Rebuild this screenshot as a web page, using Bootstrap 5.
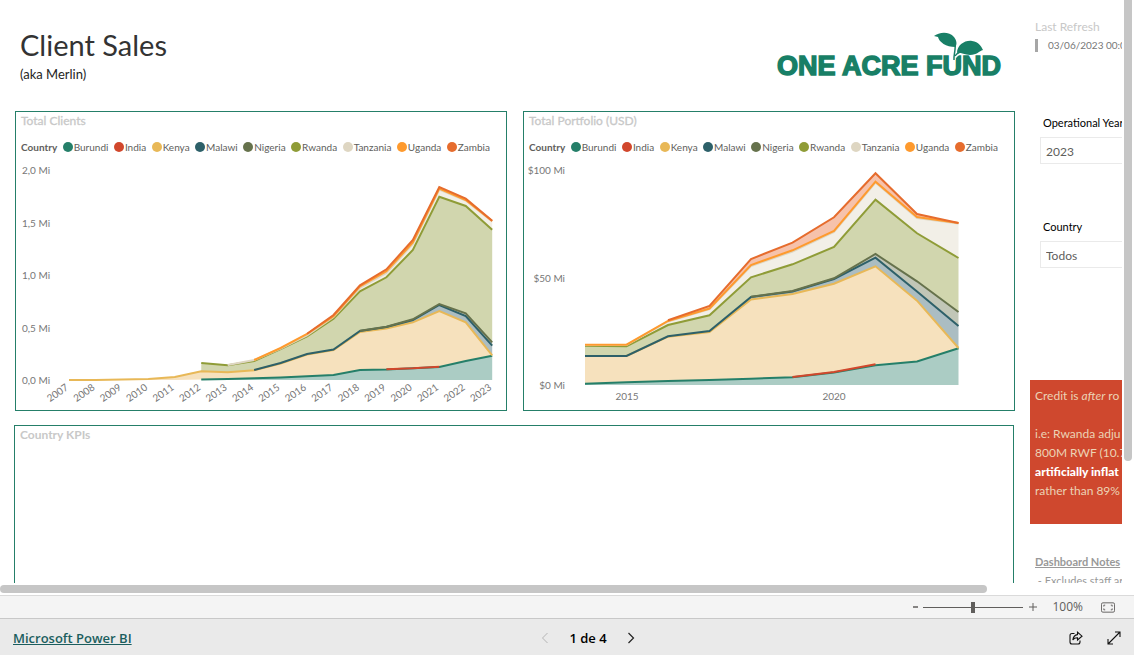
<!DOCTYPE html>
<html lang="pt">
<head>
<meta charset="utf-8">
<meta name="viewport" content="width=device-width, initial-scale=1">
<title>Client Sales</title>
<link href="https://cdn.jsdelivr.net/npm/bootstrap@5.3.0/dist/css/bootstrap.min.css" rel="stylesheet">
<style>
:root { --brand: #257f69; }
body { font-family: Lato, "Open Sans", sans-serif; font-size: 12px; line-height: 16px; color: #252423; }
.gutter-y { width: 12px; padding: 0 2px; }
.thumb-y { width: 8px; height: 79%; background: #c6c6c6; border-radius: 0 0 4px 4px; }
.gutter-x { height: 12px; padding: 2px 0; }
.thumb-x { width: 87%; height: 8px; background: #c6c6c6; border-radius: 4px; }
.report-main { padding: 0 15px 0 15px; }
.report-head { height: 111px; padding: 25px 11px 0 5px; }
.report-head h1 { font-size: 29px; line-height: 39px; font-weight: 400; color: #333; margin: 0; }
.report-head p { font-size: 13px; line-height: 20px; margin: 0; }
.charts { gap: 16px; margin-bottom: 14px; }
.visual { border: 1px solid var(--brand); min-width: 0; }
.visual h2 { font-size: 12px; line-height: 18px; font-weight: 700; color: #c8c8c8; margin: 0; padding-left: 5px; }
.charts h2 { font-weight: 400; -webkit-text-stroke: .3px #c8c8c8; }
.kpis { margin: 0 1px 0 -1px; border-bottom: 0; }
.legend-row { font-size: 10px; line-height: 16px; color: #605e5c; padding: 9px 16px 1px 5px; white-space: nowrap; }
.legend-row i { width: 10px; height: 10px; border-radius: 50%; margin-right: 1px; }
.visual svg { display: block; width: 100%; }
.visual svg text { font-size: 10px; fill: #777; }
.side { width: 92px; white-space: nowrap; }
.refresh { height: 111px; padding: 19px 0 0 5px; color: #c8c8c8; }
.refresh div { font-size: 10px; line-height: 13px; color: #777; border-left: 3px solid #a6a6a6; padding-left: 10px; margin-top: 4px; }
.slicer { height: 104px; padding: 4px 0 0 10px; }
.slicer label { display: block; font-size: 11px; line-height: 16px; color: #000; padding-left: 3px; }
.slicer select { width: 120px; height: 27px; font-size: 12px; color: #605e5c; background: #fff; border: 1px solid #eaeaea; border-radius: 0; padding: 2px 5px 0; appearance: none; margin-top: 6px; }
.note { margin-top: 61px; height: 144px; padding: 6px 0 0 5px; background: #cf482e; color: #ecd3b5; line-height: 19px; }
.note b { color: #fff; font-weight: 900; }
.dash-notes { padding: 28px 0 0 5px; color: #999; font-size: 11px; line-height: 19px; }
.zoombar { height: 24px; background: #f4f4f4; border-top: 1px solid #dadada; border-bottom: 1px solid #c8c8c8; padding-right: 19px; color: #605e5c; font-family: "Open Sans", sans-serif; }
.zoombar button, .foot button { border: 0; background: none; padding: 0; color: inherit; line-height: 16px; display: flex; align-items: center; }
.zoombar input { width: 100px; height: 12px; margin: 0 6px 0 5px; appearance: none; background: linear-gradient(#605e5c, #605e5c) center / 100% 1px no-repeat; }
.zoombar input::-webkit-slider-thumb { appearance: none; width: 4px; height: 11px; background: #605e5c; }
.zoom-value { margin: 0 18px 0 15px; }
.foot { height: 36px; background: #eaeaea; padding: 2px 13px 0; font-family: "Open Sans", sans-serif; font-size: 13px; font-weight: 600; color: #000; }
.foot a { color: #1b5e5e; }
.pager { margin-left: 42px; }
</style>
</head>
<body class="vh-100 overflow-hidden d-flex flex-column bg-white">
<main class="d-flex flex-grow-1 overflow-hidden">
  <div class="report-main d-flex flex-column flex-grow-1 overflow-hidden">
    <header class="report-head d-flex justify-content-between align-items-start flex-shrink-0">
      <div><h1>Client Sales</h1><p>(aka Merlin)</p></div>
      <svg width="228" height="52" viewBox="776 25 228 52" role="img" aria-label="One Acre Fund" overflow="visible">
        <text x="777" y="75" font-family="Liberation Sans, Arial, sans-serif" font-weight="700" font-size="27" fill="#187f66" stroke="#187f66" stroke-width="1.500">ONE ACRE FUND</text>
        <path d="M954 60C953.500 55 956 49 955 44M955 57C957 53 962 53 966 50" fill="none" stroke="#fff" stroke-width="3"/>
        <path d="M934 36C939 32 949 31 954 37C957 41 957 44 955.500 47C946 47 939 42 938 37ZM957 53C957 45 965 40 972 41C979 42 981 46 983 50C979 51 977 55 970 55C964 55 960 52 957 53Z" fill="#187f66"/>
        <path d="M954 60C953.500 55 956 49 955 44M955 56C956 54 958 53 960 52" fill="none" stroke="#187f66" stroke-width="1.500"/>
      </svg>
    </header>
    <div class="charts d-flex flex-shrink-0">
      <section class="visual w-50"><h2>Total Clients</h2><div class="legend-row d-flex justify-content-between"></div><svg id="clients" viewBox="16 156 490 254"></svg></section>
      <section class="visual w-50"><h2>Total Portfolio (USD)</h2><div class="legend-row d-flex justify-content-between"></div><svg id="portfolio" viewBox="524 156 490 254"></svg></section>
    </div>
    <section class="visual kpis flex-grow-1"><h2>Country KPIs</h2></section>
  </div>
  <aside class="side flex-shrink-0 overflow-hidden">
    <div class="refresh">Last Refresh<div>03/06/2023 00:0</div></div>
    <div class="slicer"><label for="year">Operational Year</label><select id="year"><option>2023</option></select></div>
    <div class="slicer"><label for="country">Country</label><select id="country"><option>Todos</option></select></div>
    <div class="note">Credit is <em>after</em> ro<br><br>i.e: Rwanda adju<br>800M RWF (10.7<br><b>artificially inflat</b><br>rather than 89%</div>
    <div class="dash-notes"><b class="text-decoration-underline">Dashboard Notes</b><br>&nbsp;- Excludes staff ar</div>
  </aside>
  <div class="gutter-y flex-shrink-0"><div class="thumb-y"></div></div>
</main>
<div class="gutter-x flex-shrink-0"><div class="thumb-x"></div></div>
<div class="zoombar d-flex align-items-center justify-content-end flex-shrink-0">
  <button type="button" aria-label="Zoom out"><svg width="5" height="8" viewBox="0 0 5 8"><path d="M0 4h5" stroke="currentColor" stroke-width="1.500"/></svg></button>
  <input type="range" min="0" max="100" value="50" aria-label="Zoom">
  <button type="button" aria-label="Zoom in"><svg width="8" height="8" viewBox="0 0 8 8"><path d="M0 4h8M4 0v8" stroke="currentColor"/></svg></button>
  <span class="zoom-value">100%</span>
  <button type="button" aria-label="Fit to page"><svg width="14" height="11" viewBox="0 0 15 11" fill="none" stroke="currentColor"><rect x=".5" y=".5" width="14" height="10" rx="1.500"/><path d="M3 4.500v-1.500h1.500M10.500 3H12v1.500M3 6.500V8h1.500M10.500 8H12V6.500"/></svg></button>
</div>
<footer class="foot d-flex align-items-center flex-shrink-0">
  <div class="col"><a href="#">Microsoft Power BI</a></div>
  <nav class="pager d-flex align-items-center" aria-label="Pages">
    <button type="button" aria-label="Previous page" disabled><svg width="8" height="12" viewBox="0 0 8 12" fill="none" stroke="#b5b5b5"><path d="M6.500 1l-5 5 5 5"/></svg></button>
    <span class="mx-3 px-1">1 de 4</span>
    <button type="button" aria-label="Next page"><svg width="8" height="12" viewBox="0 0 8 12" fill="none" stroke="#222" stroke-width="1.200"><path d="M1.500 1l5 5-5 5"/></svg></button>
  </nav>
  <div class="col d-flex justify-content-end gap-4">
    <button type="button" aria-label="Share"><svg width="14" height="14" viewBox="0 0 14 14" fill="none" stroke="#111" stroke-width="1.100"><path d="M5.500 2.500H3Q1 2.500 1 4.500V11Q1 13 3 13H9Q11 13 11 11V9.500M8.500 1.200L13 5.200 8.500 9V6.800Q5.500 6.600 3.800 9Q4.500 4 8.500 3.600Z"/></svg></button>
    <button type="button" aria-label="Full screen"><svg width="14" height="14" viewBox="0 0 14 14" fill="none" stroke="#111" stroke-width="1.100"><path d="M1 13L13 1M8 1H13V6M1 8V13H6"/></svg></button>
  </div>
</footer>
<script>
const countries = [
  ['Burundi', '#257f69', '#abccc4'], ['India', '#d1472c', '#efb5aa'], ['Kenya', '#e8b857', '#f6e1bd'],
  ['Malawi', '#2d6069', '#abbdc2'], ['Nigeria', '#66724c', '#c1c6b7'], ['Rwanda', '#8f9c37', '#d1d6ae'],
  ['Tanzania', '#ded6c2', '#f2efe7'], ['Uganda', '#fe9a2e', '#ffd9ae'], ['Zambia', '#e66c2d', '#f6c2ab']];
for (const row of document.querySelectorAll('.legend-row'))
  row.innerHTML = '<b>Country</b>' + countries.map(c =>
    `<span class="d-flex align-items-center"><i style="background:${c[1]}"></i>${c[0]}</span>`).join('');

// Each series lists the stacked top edge, starting at the given index on the year axis.
function stack(id, x0, step, count, base, series, extra) {
  let lower = Array(count).fill(base), areas = '', lines = '';
  series.forEach((tops, k) => {
    const [start, values] = tops, pts = values.map((y, i) => [x0 + (start + i) * step, y]);
    const under = pts.map(([x], i) => [x, lower[start + i]]).reverse();
    areas += `<polygon points="${pts.concat(under).join(' ')}" fill="${countries[k][2]}"/>`;
    lines += `<polyline points="${pts.join(' ')}" fill="none" stroke="${countries[k][1]}" stroke-width="2"/>`;
    values.forEach((y, i) => lower[start + i] = y);
  });
  document.getElementById(id).innerHTML = areas + lines + extra;
}
let years = '';
for (let i = 0; i < 17; i++) {
  const x = 69 + i * 26.45;
  years += `<text text-anchor="end" transform="translate(${x} 389) rotate(-35)">${2007 + i}</text>`;
}
['2,0', '1,5', '1,0', '0,5', '0,0'].forEach((t, i) => years += `<text x="22" y="${174 + i * 52.5}">${t} Mi</text>`);
stack('clients', 69, 26.45, 17, 380, [
  [5, [379.5, 379, 378.3, 377.5, 376.3, 375, 370, 369.5, 368.3, 367, 361, 355.7]],
  [12, [369.3, 368.3, 366.7]],
  [0, [380, 380, 379.5, 379, 377, 371.3, 372.3, 370.3, 363.5, 354.5, 350, 332, 328.5, 322.3, 311, 322.3, 355.3]],
  [7, [370, 363, 354, 349.5, 331, 327, 320, 305, 316, 345.7]],
  [11, [330.7, 326.7, 319.3, 304, 313.3, 342.3]],
  [5, [363, 365.3, 361, 349, 336.5, 318.7, 291.3, 277.3, 250, 196.7, 206, 229.7]],
  [6, [365, 360, 348.5, 335.5, 317, 288, 273, 244, 189.5, 200.5, 221.5]],
  [7, [360, 348, 334, 316.3, 286.3, 271.3, 242.5, 188.5, 200, 221]],
  [9, [333.7, 315, 285.3, 269.3, 240, 187, 198.7, 220.7]]], years);
stack('portfolio', 585, 41.5, 10, 385, [
  [0, [383.7, 382.3, 381, 380, 378.7, 377.3, 372.5, 365.3, 361.5, 348.3]],
  [5, [377, 372, 364.3]],
  [0, [356, 356, 336.7, 332, 299.5, 294, 283.7, 266.3, 300.7, 348]],
  [0, [356, 356, 336.3, 331, 297, 291.5, 279, 257.7, 291.5, 326]],
  [4, [296.7, 291, 278.3, 254, 281.3, 312]],
  [0, [345.7, 346.3, 325, 315.3, 277.3, 264.3, 247, 199.7, 233.3, 258]],
  [0, [345, 345, 321.5, 309, 266, 251.5, 232, 182.5, 218, 223.5]],
  [0, [344.7, 344.7, 321, 308.5, 265, 250.3, 231, 181.7, 217, 223]],
  [2, [320.3, 306, 259, 242.7, 217.3, 173.3, 214, 223]]],
  ['$100', '$50', '$0'].map((t, i) => `<text x="565" y="${174 + i * 107.5}" text-anchor="end">${t} Mi</text>`).join('') +
  '<text x="627" y="400" text-anchor="middle">2015</text><text x="834" y="400" text-anchor="middle">2020</text>');
</script>
<script src="https://cdn.jsdelivr.net/npm/bootstrap@5.3.0/dist/js/bootstrap.bundle.min.js"></script>
</body>
</html>
